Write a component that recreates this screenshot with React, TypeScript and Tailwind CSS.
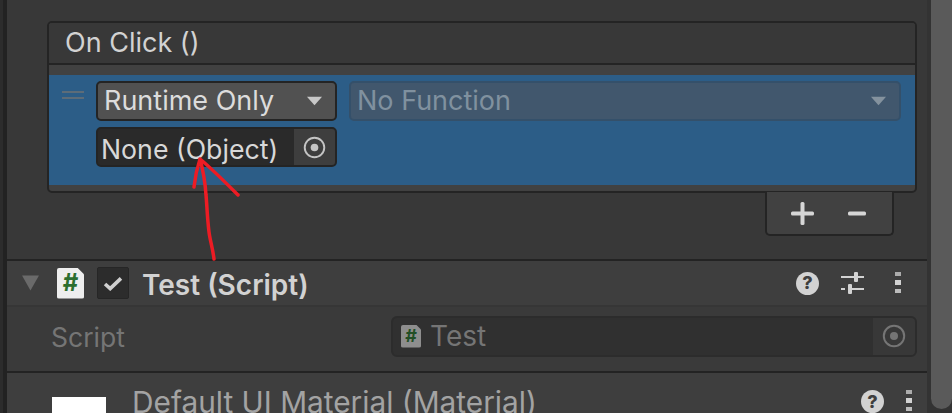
const font = { fontFamily: 'Inter, "Liberation Sans", sans-serif' };

function Caret({ className }: { className: string }) {
  return (
    <svg viewBox="0 0 18 12" preserveAspectRatio="none" className={className} fill="currentColor">
      <path d="M1 1 H17 L9 11 Z" />
    </svg>
  );
}

function Target({ color, size }: { color: string; size: number }) {
  return (
    <svg width={size} height={size} viewBox="0 0 24 24" fill="none">
      <circle cx="12" cy="12" r="10.2" stroke={color} strokeWidth="2" />
      <circle cx="12" cy="12" r="4" fill={color} />
    </svg>
  );
}

function Help() {
  return (
    <span className="flex h-[23px] w-[23px] items-center justify-center rounded-full bg-[#d2d2d2] text-[18px] font-extrabold leading-none text-[#3e3e3e]">
      ?
    </span>
  );
}

function Dots() {
  return (
    <svg width="8" height="22" viewBox="0 0 8 22" fill="#d2d2d2">
      <rect x="1" y="0" width="6" height="4" opacity="0.75" />
      <rect x="1" y="8" width="6" height="5" />
      <rect x="1" y="17" width="6" height="4" opacity="0.85" />
    </svg>
  );
}

function ScriptIcon({ w, h, bg, fg, text }: { w: number; h: number; bg: string; fg: string; text: string }) {
  return (
    <span
      className={`flex items-center justify-center font-bold leading-none ${text}`}
      style={{ width: w, height: h, background: bg, color: fg, clipPath: 'polygon(0 0, 75% 0, 100% 22%, 100% 100%, 0 100%)', borderRadius: 2 }}
    >
      #
    </span>
  );
}

export default function App() {
  return (
    <div className="relative flex h-[413px] w-[952px] overflow-hidden bg-[#383838] text-[#d2d2d2]" style={font}>
      <div className="flex w-[7px] shrink-0 bg-[#222222]">
        <div className="w-[3px] bg-[#2c2c2c]" />
      </div>

      <div className="flex min-w-0 flex-1 flex-col">
        <div className="flex h-[259px] shrink-0 flex-col pl-[40px] pr-[10px] pt-[21px]">
          <div className="overflow-hidden rounded-[5px] border-2 border-[#242424] bg-[#414141]">
            <div className="flex h-[42px] items-center border-b-2 border-[#242424] bg-[#383838] pl-[16px] text-[27px] text-[#d2d2d2]">
              On Click ()
            </div>
            <div className="pb-[6px] pt-[10px]">
              <div className="h-[110px] bg-[#2c5d87] pl-[47px] pr-[14px] pt-[6px]">
                <div className="relative flex flex-col gap-[6px]">
                  <div className="absolute left-[-34px] top-[10px] flex w-[22px] flex-col gap-[4px]">
                    <div className="h-[2px] bg-[#5d6c78]" />
                    <div className="h-[2px] bg-[#5d6c78]" />
                  </div>
                  <div className="flex gap-[12px]">
                    <div className="flex h-[40px] w-[241px] items-center justify-between rounded-[5px] border-2 border-[#242424] bg-[#515151] pl-[6px] pr-[12px] text-[27px] text-[#dcdcdc]">
                      <span>Runtime Only</span>
                      <Caret className="h-[10px] w-[17px] text-[#c8c8c8]" />
                    </div>
                    <div className="flex h-[40px] flex-1 items-center justify-between rounded-[5px] border-2 border-[#34506a] bg-[#41576d] pl-[6px] pr-[12px] text-[27px] text-[#80919f]">
                      <span>No Function</span>
                      <Caret className="h-[10px] w-[17px] text-[#84929e]" />
                    </div>
                  </div>
                  <div className="flex h-[40px] w-[241px] overflow-hidden rounded-[5px] border-2 border-[#242424] bg-[#2a2a2a] text-[26.7px] text-[#d8d8d8]">
                    <span className="flex-1 whitespace-nowrap pl-[3px] leading-[40px]">None (Object)</span>
                    <span className="flex w-[41px] items-center justify-center bg-[#3e3e3e]">
                      <Target color="#c4c4c4" size={23} />
                    </span>
                  </div>
                </div>
              </div>
            </div>
          </div>
          <div className="mr-[23px] mt-[-1px] flex h-[44px] w-[129px] items-center justify-between self-end rounded-b-[5px] border-2 border-t-0 border-[#242424] bg-[#414141] pl-[24px] pr-[26px]">
            <svg width="23" height="23" viewBox="0 0 23 23" fill="#d6d6d6">
              <rect x="0" y="9.5" width="23" height="4" rx="1.5" />
              <rect x="9.5" y="0" width="4" height="23" rx="1.5" />
            </svg>
            <svg width="18" height="5" viewBox="0 0 18 5" fill="#d6d6d6">
              <rect width="18" height="4" y="0.5" rx="1.5" />
            </svg>
          </div>
        </div>

        <section className="shrink-0 border-y-2 border-[#232323]">
          <div className="flex h-[46px] items-center border-b-2 border-[#363636] bg-[#3e3e3e] pl-[14px] pr-[25px]">
            <Caret className="mr-[17px] h-[18px] w-[19px] text-[#6a6a6a]" />
            <ScriptIcon w={27} h={31} bg="#eeeeee" fg="#2c6e2f" text="text-[24px]" />
            <span className="ml-[13px] flex h-[32px] w-[32px] items-center justify-center rounded-[2px] border border-[#262626] bg-[#2c2c2c]">
              <svg width="20" height="15" viewBox="0 0 21 16" fill="none">
                <path d="M2 8.5 L7.5 13.5 L19 2.5" stroke="#d0d0d0" strokeWidth="3.8" />
              </svg>
            </span>
            <span className="ml-[13px] pt-[3px] text-[28px] font-semibold text-[#d2d2d2]">Test (Script)</span>
            <div className="ml-auto flex items-center">
              <Help />
              <svg className="ml-[22px]" width="23" height="22" viewBox="0 0 23 22" fill="#d2d2d2">
                <rect x="0" y="4" width="13" height="2" />
                <rect x="13" y="0" width="4" height="10" rx="1" />
                <rect x="17" y="4" width="6" height="2" />
                <rect x="0" y="16" width="4" height="2" />
                <rect x="7" y="12" width="4" height="10" rx="1" />
                <rect x="11" y="16" width="12" height="2" />
              </svg>
              <span className="ml-[30px]"><Dots /></span>
            </div>
          </div>
          <div className="flex h-[64px] items-center justify-between bg-[#3a3a3a] pb-[6px] pl-[44px] pr-[10px]">
            <span className="pt-[2px] text-[26.5px] leading-none text-[#757575]">Script</span>
            <div className="flex h-[41px] w-[526px] overflow-hidden rounded-[6px] border-2 border-[#2c2c2c] bg-[#303030]">
              <div className="flex flex-1 items-center gap-[9px] pl-[8px]">
                <ScriptIcon w={20} h={23} bg="#8e8e8e" fg="#234f26" text="text-[18px]" />
                <span className="text-[28px] text-[#757575]">Test</span>
              </div>
              <span className="flex w-[42px] items-center justify-center bg-[#383838]">
                <Target color="#757575" size={24} />
              </span>
            </div>
          </div>
        </section>

        <div className="flex min-h-0 flex-1 items-start overflow-hidden bg-[#3e3e3e] pl-[45px] pr-[14px]">
          <div className="mt-[24px] h-[20px] w-[54px] shrink-0 bg-white" />
          <span className="ml-[26px] mt-[11px] whitespace-nowrap text-[29.8px] leading-[36px] text-[#a3a3a3]">Default UI Material (Material)</span>
          <div className="ml-auto mt-[17px] flex items-start gap-[21px]">
            <Help />
            <Dots />
          </div>
        </div>
      </div>

      <div className="flex w-[25px] shrink-0 bg-[#333333] pl-[4px]">
        <div className="h-[409px] w-full rounded-b-[12px] bg-[#5a5a5a]" />
      </div>

      <svg className="pointer-events-none absolute left-0 top-0" width="952" height="413" fill="none">
        <path d="M214 259 C213 250 210 240 209 232 C207 215 207 205 206 195 C205 180 203 170 200 159 M194 187 C195 178 197 168 200 159 C210 167 228 185 238 195" stroke="#ed1c24" strokeWidth="3.5" strokeLinecap="round" strokeLinejoin="round" />
      </svg>
    </div>
  );
}
